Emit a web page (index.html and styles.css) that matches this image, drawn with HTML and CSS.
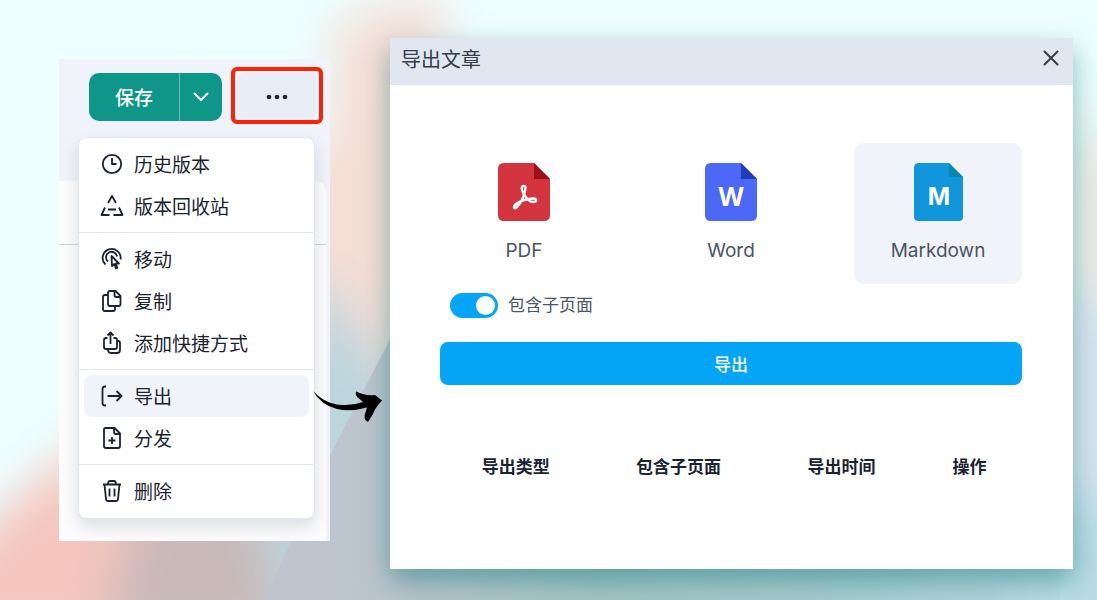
FILE: index.html
```
<!DOCTYPE html>
<html lang="zh-CN">
<head>
  <meta charset="UTF-8">
  <meta name="viewport" content="width=device-width, initial-scale=1.0">
  <title>导出文章</title>
  <link rel="stylesheet" href="styles.css">
</head>
<body>
  <!-- 背景 -->
  <svg class="backdrop" viewBox="0 0 1097 600" preserveAspectRatio="none" aria-hidden="true">
    <defs>
      <filter id="soft" x="-30%" y="-30%" width="160%" height="160%"><feGaussianBlur stdDeviation="24"/></filter>
      <linearGradient id="floor" x1="264" y1="0" x2="1097" y2="0" gradientUnits="userSpaceOnUse">
        <stop offset="0" stop-color="#bfc5cf"/>
        <stop offset="0.150" stop-color="#bcc5cd"/>
        <stop offset="0.400" stop-color="#a6c6c6"/>
        <stop offset="0.700" stop-color="#a9cdd2"/>
        <stop offset="1" stop-color="#b9dce4"/>
      </linearGradient>
    </defs>
    <rect width="1097" height="600" fill="#edffff"/>
    <g filter="url(#soft)">
      <path d="M335 20L440 -10L470 640H-60V590L60 470L330 130Z" fill="#f5ded5"/>
      <path d="M-60 640V570L60 460L180 500L130 640Z" fill="#f4c6be"/>
      <path d="M140 500H270L290 640H100Z" fill="#c8b8b8"/>
      <path d="M310 260L400 390V640H290L262 540Z" fill="#bcd6de"/>
    </g>
    <path d="M400 320L330 455L264 600H1060V320Z" fill="url(#floor)"/>
    <g filter="url(#soft)">
      <path d="M1140 90L1060 160V420L1140 450Z" fill="#ecebe7"/>
      <path d="M1140 330L1060 280V540L1140 480Z" fill="#d6e1ef"/>
      <path d="M1030 500H1140V660H1030Z" fill="#b9dce4"/>
    </g>
  </svg>

  <main class="stage">
    <section class="panel">
      <div class="toolbar">
        <div class="split">
          <button class="split-main" type="button">保存</button>
          <button class="split-arrow" type="button" aria-label="更多保存选项">
            <svg width="16" height="10" viewBox="0 0 16 10"><path d="M1.500 1.500L8 8L14.500 1.500"/></svg>
          </button>
        </div>
        <div class="highlight">
          <button class="more" type="button" aria-label="更多">
            <svg width="22" height="6" viewBox="0 0 22 6"><circle cx="3" cy="3" r="2.300"/><circle cx="11" cy="3" r="2.300"/><circle cx="19" cy="3" r="2.300"/></svg>
          </button>
        </div>
      </div>
      <div class="paper"><div class="paper-head"></div></div>

      <div class="menu">
        <button class="item" type="button">
          <svg class="icon" viewBox="0 0 24 24"><circle cx="12" cy="12" r="9.200"/><path d="M12 6V12H16.500"/></svg>历史版本
        </button>
        <button class="item" type="button">
          <svg class="icon" viewBox="0 0 24 24"><path d="M8 9L12 2L16 9M5 13.500L1.500 21H9.500M19 13.500L22.500 21H13.500M8 15.500H16"/></svg>版本回收站
        </button>
        <hr>
        <button class="item" type="button">
          <svg class="icon" viewBox="0 0 24 24"><path d="M5.500 17.500A9 9 0 1 1 20.500 12.500M8 14.500A5.500 5.500 0 1 1 17 9.500M11.500 9L12 19L14.300 17L16 21.500L17.300 21L15.800 16.500H19Z"/></svg>移动
        </button>
        <button class="item" type="button">
          <svg class="icon" viewBox="0 0 24 24"><path d="M10 2H15.500L20.500 7V15Q20.500 17 18.500 17H10Q8 17 8 15V4Q8 2 10 2ZM14.500 2V6Q14.500 8 16.500 8H20.500M8 6H5Q3 6 3 8V20Q3 22 5 22H13Q15 22 15 20V17"/></svg>复制
        </button>
        <button class="item" type="button">
          <svg class="icon" viewBox="0 0 24 24"><path d="M7.500 7H6Q4 7 4 9V16Q4 18 6 18H15Q17 18 17 16V9Q17 7 15 7H13.500M10.500 13V1.500M7.500 4.500L10.500 1.500L13.500 4.500M17 10H18Q20 10 20 12V19Q20 22 17 22H11Q8 22 8 18"/></svg>添加快捷方式
        </button>
        <hr>
        <button class="item active" type="button">
          <svg class="icon" viewBox="0 0 24 24"><path d="M6 2.500H5Q2.500 2.500 2.500 5V19Q2.500 21.500 5 21.500H6M7.500 12H21.500M16.500 7L21.500 12L16.500 17"/></svg>导出
        </button>
        <button class="item" type="button">
          <svg class="icon" viewBox="0 0 24 24"><path d="M5 2H14.500L20 7.500V20Q20 22 18 22H6Q4 22 4 20V3.500Q4 2 5.500 2M14 2V6Q14 8 16 8H20M12 11V18M8.500 14.500H15.500"/></svg>分发
        </button>
        <hr>
        <button class="item" type="button">
          <svg class="icon" viewBox="0 0 24 24"><path d="M3 5.500H21M8 5.500Q8 2 10 2H14Q16 2 16 5.500M4.500 5.500L6 20Q6.200 22 8 22H16Q17.800 22 18 20L19.500 5.500M9.500 9.500V17.500M14.500 9.500V17.500"/></svg>删除
        </button>
      </div>

      <svg class="pointer" width="70" height="34" viewBox="0 0 70 34" aria-hidden="true">
        <path d="M0 1Q10 12 24 14.500Q38 16.500 50 12L46 8.500Q42 6 43 1.500Q52 6 62 5L69 10.500Q62 18 60 24L55 32Q50 29 52 24L54 17.500Q38 22 24 19Q8 15 0 1Z"/>
      </svg>
    </section>

    <section class="dialog">
      <header class="dialog-head">
        <h1>导出文章</h1>
        <button class="close" type="button" aria-label="关闭">
          <svg width="16" height="16" viewBox="0 0 16 16"><path d="M1.500 1.500L14.500 14.500M14.500 1.500L1.500 14.500"/></svg>
        </button>
      </header>
      <div class="dialog-body">
        <div class="formats">
          <button class="format" type="button">
            <svg width="52" height="58" viewBox="0 0 52 58">
              <path fill="#d3343d" d="M6 0H36L52 16V52Q52 58 46 58H6Q0 58 0 52V6Q0 0 6 0Z"/>
              <path fill="#9c1119" d="M36 0L52 16H36Z"/>
              <path fill="none" stroke="#fff" stroke-width="2.400" stroke-linejoin="round" d="M25.500 23C23 23 23.500 27 25.500 30.500C28 35 31 39 35 39C39.500 39 39 35.500 35 35.500C30 35.500 22 38 18 41C14.500 44 16 46.500 18.500 44.500C22 41.500 25.500 34 27 28C28 24 27.500 23 25.500 23Z"/>
            </svg>
            <span>PDF</span>
          </button>
          <button class="format" type="button">
            <svg width="52" height="58" viewBox="0 0 52 58">
              <path fill="#4c68f7" d="M6 0H36L52 16V52Q52 58 46 58H6Q0 58 0 52V6Q0 0 6 0Z"/>
              <path fill="#213cb8" d="M36 0L52 16H36Z"/>
              <text class="mark" x="26" y="43">W</text>
            </svg>
            <span>Word</span>
          </button>
          <button class="format selected" type="button" aria-pressed="true">
            <svg width="52" height="58" viewBox="0 0 52 58">
              <path fill="#1296db" d="M7 0H37L51 14V54Q51 58 47 58H7Q2 58 2 54V5Q2 0 7 0Z"/>
              <path fill="#0b86b0" d="M37 0L51 14H37Z"/>
              <text class="mark mark-md" x="27" y="42">M</text>
            </svg>
            <span>Markdown</span>
          </button>
        </div>

        <div class="option">
          <input type="checkbox" id="with-children" class="switch" checked>
          <label for="with-children">包含子页面</label>
        </div>

        <button class="submit" type="button">导出</button>

        <table class="records">
          <thead>
            <tr>
              <th class="col-type">导出类型</th>
              <th class="col-children">包含子页面</th>
              <th class="col-time">导出时间</th>
              <th class="col-action">操作</th>
            </tr>
          </thead>
        </table>
      </div>
    </section>
  </main>
</body>
</html>
```

FILE: styles.css
```
* {
  box-sizing: border-box;
}

body {
  margin: 0;
  min-height: 100vh;
  background-color: #edffff;
  font-family: Inter, "Noto Sans CJK SC", sans-serif;
  color: #1b2330;
}

button {
  font-family: inherit;
  border: 0;
  padding: 0;
  background: none;
  color: inherit;
  cursor: pointer;
}

.backdrop {
  position: absolute;
  top: 0;
  left: 0;
  width: 100%;
  height: 100%;
}

.stage {
  position: relative;
  display: flex;
  align-items: flex-start;
  gap: 60px;
  padding: 38px 24px 30px 59px;
}

/* 左侧面板 */
.panel {
  position: relative;
  flex: 0 0 271px;
  margin-top: 21px;
  background: #f0f3f9;
}

.toolbar {
  display: flex;
  align-items: flex-start;
  gap: 9px;
  padding: 8px 7px 57px 30px;
}

.split {
  display: flex;
  flex: 1;
  height: 48px;
  margin-top: 6px;
  border-radius: 10px;
  overflow: hidden;
  background: #0e9688;
  color: #fff;
}

.split-main {
  flex: 1;
  padding-bottom: 2px;
  font-size: 19px;
  font-weight: 500;
}

.split-arrow {
  width: 43px;
  border-left: 1px solid #75b5b2;
}

.split-arrow path {
  fill: none;
  stroke: #fff;
  stroke-width: 2;
  stroke-linecap: round;
}

.highlight {
  width: 92px;
  height: 57px;
  padding: 2px;
  border: 4px solid #fc2208;
  border-radius: 6px;
}

.more {
  width: 100%;
  height: 100%;
  padding-bottom: 2px;
  border-radius: 8px;
  background: #e9edf5;
}

.more circle {
  fill: #1b2330;
}

.paper {
  height: 360px;
  margin-right: 4px;
  border-top-right-radius: 10px;
  background: #fcfcfd;
}

.paper-head {
  height: 64px;
  border-bottom: 1px solid #cbd2dc;
}

.menu {
  position: absolute;
  top: 78px;
  left: 19px;
  width: 237px;
  padding: 5px 5px 6px;
  border: 1px solid #e0e7ef;
  border-radius: 8px;
  background: #fff;
  box-shadow: 0 8px 16px rgba(30, 40, 60, 0.14);
}

.menu hr {
  margin: 5px -5px;
  border: 0;
  border-top: 1px solid #e2e8f0;
}

.item {
  display: flex;
  align-items: center;
  gap: 10px;
  width: 100%;
  height: 42px;
  padding: 0 0 1px 16px;
  border-radius: 8px;
  font-size: 19px;
}

.item.active {
  background: #f0f3f9;
}

.icon {
  width: 24px;
  height: 24px;
  fill: none;
  stroke: #1b2330;
  stroke-width: 1.8;
  stroke-linejoin: round;
}

.pointer {
  position: absolute;
  top: 331px;
  left: 254px;
}

/* 导出弹窗 */
.dialog {
  flex: 1;
  min-height: 531px;
  background: #fff;
  box-shadow: 0 12px 26px rgba(20, 120, 120, 0.5);
}

.dialog-head {
  display: flex;
  align-items: center;
  justify-content: space-between;
  height: 47px;
  padding: 0 14px 7px 11px;
  background: #e1e7f0;
}

.dialog-head h1 {
  margin: 0;
  font-size: 20px;
  font-weight: 400;
  color: #353d4a;
}

.close {
  display: flex;
}

.close path {
  stroke: #353d4a;
  stroke-width: 2;
  stroke-linecap: round;
}

.dialog-body {
  padding: 58px 51px 0 50px;
}

.formats {
  display: flex;
  justify-content: space-between;
}

.format {
  display: flex;
  flex-direction: column;
  align-items: center;
  gap: 18px;
  width: 168px;
  height: 141px;
  padding-top: 20px;
  border-radius: 10px;
  font-size: 19px;
  line-height: 24px;
  color: #4b5563;
}

.format.selected {
  background: #f0f3f9;
}

.mark {
  fill: #fff;
  font-family: "Noto Sans", sans-serif;
  font-size: 26px;
  font-weight: 700;
  text-anchor: middle;
}

.mark-md {
  font-family: Inter, sans-serif;
  font-size: 24px;
}

.option {
  display: flex;
  align-items: center;
  gap: 10px;
  margin-top: 9px;
  padding-left: 10px;
  font-size: 17px;
  line-height: 25px;
  color: #4b5563;
}

.switch {
  appearance: none;
  width: 48px;
  height: 25px;
  margin: 0;
  padding: 3px;
  border-radius: 13px;
  background: #cbd2dc;
}

.switch::before {
  content: "";
  display: block;
  width: 19px;
  height: 19px;
  border-radius: 50%;
  background: #fff;
}

.switch:checked {
  background: #04a5f5;
}

.switch:checked::before {
  margin-left: auto;
}

.submit {
  width: 100%;
  height: 43px;
  margin-top: 24px;
  border-radius: 8px;
  background: #04a5f5;
  color: #fff;
  font-size: 17px;
  font-weight: 500;
}

.records {
  width: 100%;
  margin-top: 69px;
  border-collapse: collapse;
  table-layout: fixed;
}

.records th {
  padding: 0;
  font-size: 17px;
  font-weight: 700;
  line-height: 26px;
}

.col-type,
.col-time {
  width: 26%;
}

.col-children {
  width: 30%;
}

.col-action {
  width: 18%;
}
```
